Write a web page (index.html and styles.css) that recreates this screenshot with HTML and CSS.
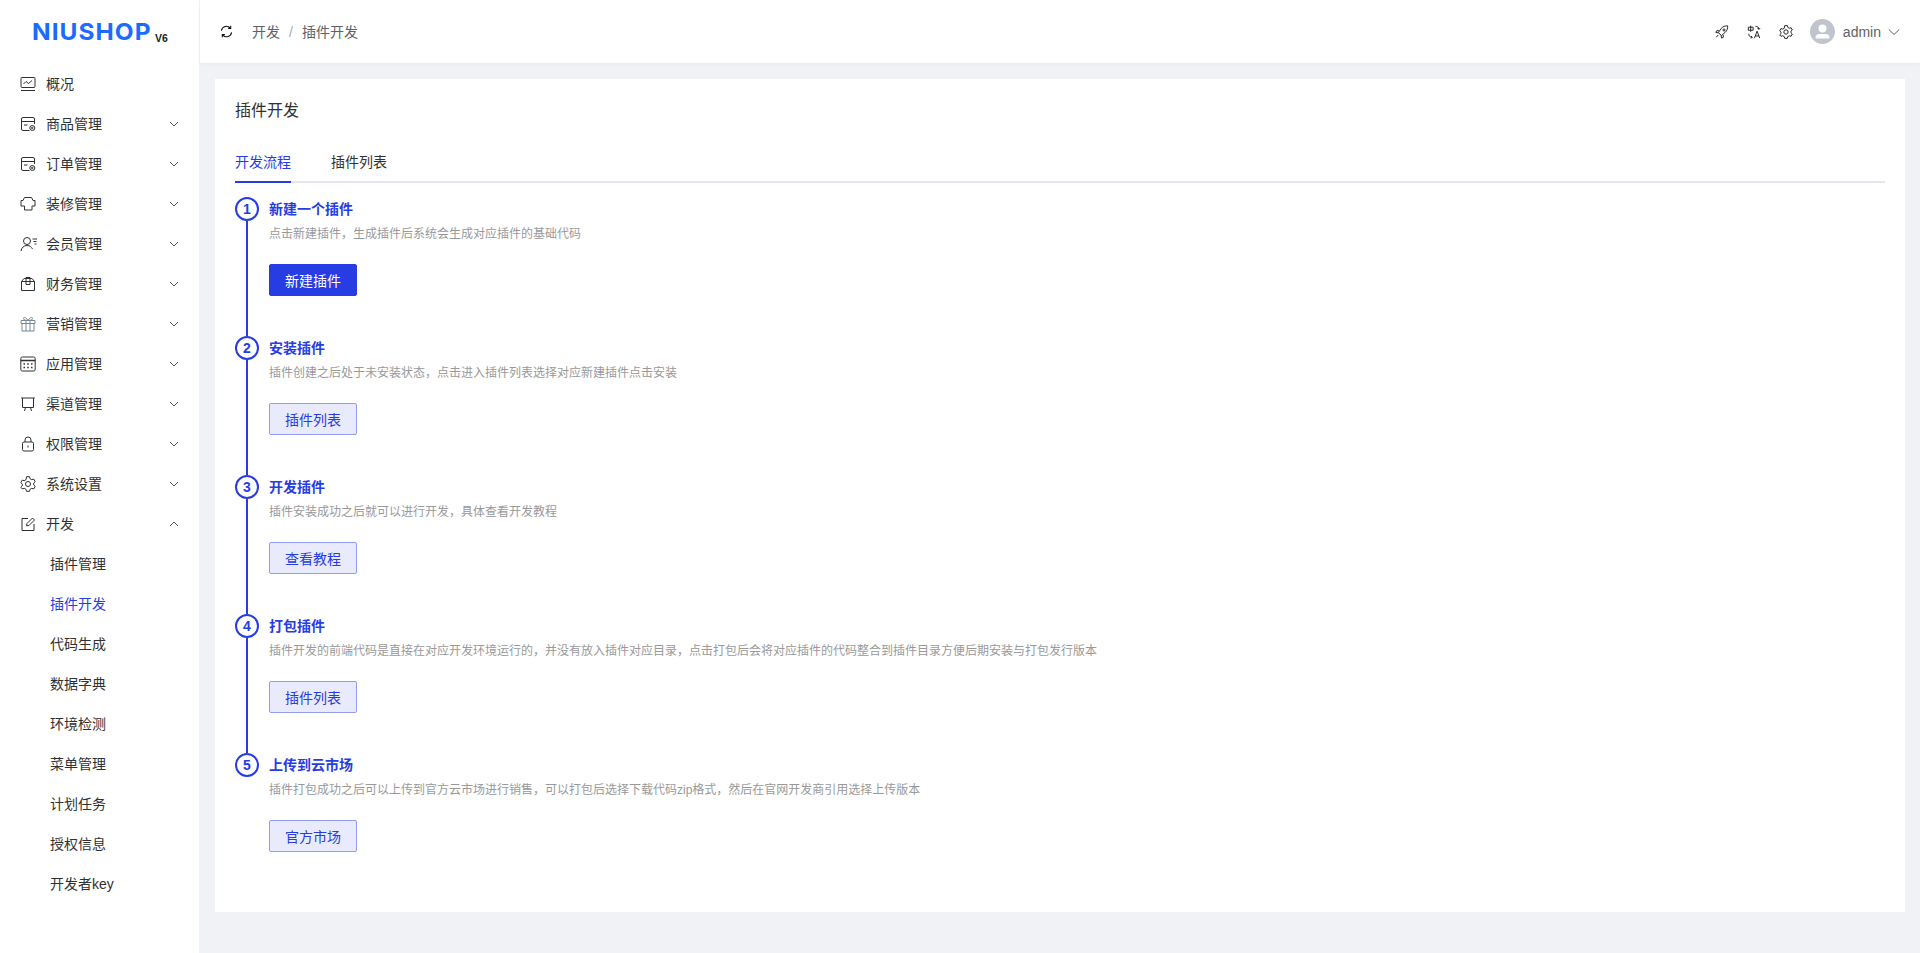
FILE: index.html
```html
<!DOCTYPE html>
<html lang="zh-CN">
<head>
<meta charset="utf-8">
<title>插件开发</title>
<link rel="stylesheet" href="styles.css">
</head>
<body>
<div class="app">
  <aside class="sidebar">
    <div class="logo"><span class="logo-word">NIUSHOP</span><span class="logo-ver">V6</span></div>
    <nav class="menu">
      <a class="item"><svg class="ico" viewBox="0 0 16 16"><rect x="1" y="1.5" width="14" height="10" rx="1"/><path d="M3.5 8l2.5-2.5 2.5 2 3.5-3M1 14.5h14"/></svg><span class="label">概况</span></a>
      <a class="item"><svg class="ico" viewBox="0 0 16 16"><path d="M14.5 8V3a1.500 1.500 0 0 0-1.500-1.500H3A1.500 1.500 0 0 0 1.500 3v10A1.500 1.500 0 0 0 3 14.500h6.500M1.500 5.500h13M4 9h3.500"/><circle cx="12.300" cy="12" r="2.500"/><circle cx="12.300" cy="12" r=".8"/></svg><span class="label">商品管理</span><svg class="chev" viewBox="0 0 12 12"><path d="M2 4l4 4 4-4"/></svg></a>
      <a class="item"><svg class="ico" viewBox="0 0 16 16"><path d="M14.500 8V3a1.500 1.500 0 0 0-1.500-1.500H3A1.500 1.500 0 0 0 1.500 3v10A1.500 1.500 0 0 0 3 14.500h6.500M1.500 5.500h13M4 9h3.500"/><circle cx="12.300" cy="12" r="2.500"/><circle cx="12.300" cy="12" r=".8"/></svg><span class="label">订单管理</span><svg class="chev" viewBox="0 0 12 12"><path d="M2 4l4 4 4-4"/></svg></a>
      <a class="item"><svg class="ico" viewBox="0 0 16 16"><path d="M4.500 1.500h7l1.500 3h2v5.500h-3v4H4.500v-4H1V4.500h2z"/></svg><span class="label">装修管理</span><svg class="chev" viewBox="0 0 12 12"><path d="M2 4l4 4 4-4"/></svg></a>
      <a class="item"><svg class="ico ico-wide" viewBox="0 0 18 16"><circle cx="7" cy="5" r="3.500"/><path d="M1 15c.5-3.500 3-5.500 6-5.500s4.500 1.500 5.500 3.500M12.500 3h4.500M13.500 5.500h3M14.500 8h2"/></svg><span class="label">会员管理</span><svg class="chev" viewBox="0 0 12 12"><path d="M2 4l4 4 4-4"/></svg></a>
      <a class="item"><svg class="ico" viewBox="0 0 16 16"><path d="M4 2.500h8l2.500 3v9h-13v-9zM1.500 5.500h13M6 1.500h4v7H6z"/></svg><span class="label">财务管理</span><svg class="chev" viewBox="0 0 12 12"><path d="M2 4l4 4 4-4"/></svg></a>
      <a class="item"><svg class="ico ico-soft" viewBox="0 0 16 16"><path d="M1 4.500h14v3H1zM2 7.500v7.500h12V7.500M6 4.500V15M10 4.500V15M8 4.500C6 1 3.500 .8 3.500 2.500S6 4.500 8 4.500c2 0 4.500-.3 4.500-2S10 1 8 4.500z"/></svg><span class="label">营销管理</span><svg class="chev" viewBox="0 0 12 12"><path d="M2 4l4 4 4-4"/></svg></a>
      <a class="item"><svg class="ico" viewBox="0 0 16 16"><rect x=".8" y="1" width="14.400" height="14" rx="1.500"/><path d="M.8 4.500h14.400M3.500 8h1.500M7.200 8h1.500M11 8h1.500M3.500 11.500h1.500M7.200 11.500h1.500M11 11.500h1.500" stroke-width="1.400"/></svg><span class="label">应用管理</span><svg class="chev" viewBox="0 0 12 12"><path d="M2 4l4 4 4-4"/></svg></a>
      <a class="item"><svg class="ico" viewBox="0 0 16 16"><path d="M1 2h14M2.500 2v9.500h11V2M5.500 11.500L4.500 15M10.500 11.500l1 3.500"/></svg><span class="label">渠道管理</span><svg class="chev" viewBox="0 0 12 12"><path d="M2 4l4 4 4-4"/></svg></a>
      <a class="item"><svg class="ico" viewBox="0 0 16 16"><rect x="2.500" y="6" width="11" height="9" rx="1.500"/><path d="M5 6V4a3 3 0 0 1 6 0v2M8 9.500v2"/></svg><span class="label">权限管理</span><svg class="chev" viewBox="0 0 12 12"><path d="M2 4l4 4 4-4"/></svg></a>
      <a class="item"><svg class="ico" viewBox="0 0 16 16"><path d="M6.500 1.200h3l.5 2 1.800 1 2-.6 1.400 2.600-1.500 1.400v1.800l1.500 1.400-1.400 2.600-2-.6-1.800 1-.5 2h-3l-.5-2-1.800-1-2 .6L.8 11.800l1.500-1.400V8.600L.8 7.200l1.400-2.600 2 .6 1.800-1z" transform="translate(0 -.5)"/><circle cx="8" cy="8" r="2.500"/></svg><span class="label">系统设置</span><svg class="chev" viewBox="0 0 12 12"><path d="M2 4l4 4 4-4"/></svg></a>
      <a class="item"><svg class="ico" viewBox="0 0 16 16"><path d="M8 2.500H2v12h12V8"/><path d="M6.500 9.800L7 7.500 12.500 2l2 2L9 9.500z"/></svg><span class="label">开发</span><svg class="chev" viewBox="0 0 12 12"><path d="M2 8l4-4 4 4"/></svg></a>
      <a class="sub">插件管理</a>
      <a class="sub sub-active">插件开发</a>
      <a class="sub">代码生成</a>
      <a class="sub">数据字典</a>
      <a class="sub">环境检测</a>
      <a class="sub">菜单管理</a>
      <a class="sub">计划任务</a>
      <a class="sub">授权信息</a>
      <a class="sub">开发者key</a>
    </nav>
  </aside>
  <div class="main">
    <header class="topbar">
      <svg class="refresh" viewBox="0 0 14 14"><path d="M1.500 6A5.500 5.500 0 0 1 11 3.200M12.500 8A5.500 5.500 0 0 1 3 10.800"/><path d="M11.500 .8v2.800H8.700M2.500 13.200v-2.800h2.800"/></svg>
      <div class="crumbs"><span>开发</span><span class="sep">/</span><span>插件开发</span></div>
      <div class="top-right">
        <svg class="top-ico" viewBox="0 0 16 16"><path d="M5.500 10.500L4 8.500 7 4c2-2.500 4.500-3 7.500-3 0 3-.5 5.500-3 7.500L7.500 12z"/><circle cx="10.300" cy="5.700" r="1.200"/><path d="M4.500 6.500H2L1 8.500l3 .5M9.500 11.500V14l-2 1-.5-3M3.500 11.500L1.500 14"/></svg>
        <svg class="top-ico" viewBox="0 0 16 16"><path d="M1.500 2.500h5.500v3.500H1.500zM4.200 .8v7M9.500 1.500c2.500 0 4 1 4 3.500M12 3.500l1.500 1.500L15 3.500M2 10c0 2.500 1.500 4 4 4M4.500 12.500L6 14l-1.500 1.500M8.500 15l3-8 3 8M9.500 12.500h4"/></svg>
        <svg class="top-ico top-gear" viewBox="0 0 16 16"><path d="M6.500 1.200h3l.5 2 1.800 1 2-.6 1.400 2.600-1.500 1.400v1.800l1.500 1.400-1.400 2.600-2-.6-1.800 1-.5 2h-3l-.5-2-1.800-1-2 .6L.8 11.800l1.500-1.400V8.600L.8 7.200l1.400-2.600 2 .6 1.800-1z" transform="translate(0 -.5)"/><circle cx="8" cy="8" r="2.500"/></svg>
        <div class="user">
          <svg class="avatar" viewBox="0 0 25 25"><circle cx="12.500" cy="12.500" r="12.500" fill="#c0c4cc"/><circle cx="12.500" cy="9.500" r="4" fill="#fff"/><path d="M5.500 18.500c0-2.300 1.500-3.500 3.500-3.500h7c2 0 3.500 1.200 3.500 3.500 0 .8-.5 1-1 1h-12c-.5 0-1-.2-1-1z" fill="#fff"/></svg>
          <span class="uname">admin</span>
          <svg class="user-chev" viewBox="0 0 12 12"><path d="M.8 3.500L6 8.500l5.200-5"/></svg>
        </div>
      </div>
    </header>
    <main class="content">
      <section class="card">
        <h1 class="card-title">插件开发</h1>
        <div class="tabs">
          <span class="tab tab-active">开发流程</span>
          <span class="tab">插件列表</span>
        </div>
        <ol class="steps">
          <li class="step">
            <div class="rail"><span class="num">1</span><span class="line"></span></div>
            <div class="body">
              <div class="step-title">新建一个插件</div>
              <div class="step-desc">点击新建插件，生成插件后系统会生成对应插件的基础代码</div>
              <button class="btn btn-primary">新建插件</button>
            </div>
          </li>
          <li class="step">
            <div class="rail"><span class="num">2</span><span class="line"></span></div>
            <div class="body">
              <div class="step-title">安装插件</div>
              <div class="step-desc">插件创建之后处于未安装状态，点击进入插件列表选择对应新建插件点击安装</div>
              <button class="btn">插件列表</button>
            </div>
          </li>
          <li class="step">
            <div class="rail"><span class="num">3</span><span class="line"></span></div>
            <div class="body">
              <div class="step-title">开发插件</div>
              <div class="step-desc">插件安装成功之后就可以进行开发，具体查看开发教程</div>
              <button class="btn">查看教程</button>
            </div>
          </li>
          <li class="step">
            <div class="rail"><span class="num">4</span><span class="line"></span></div>
            <div class="body">
              <div class="step-title">打包插件</div>
              <div class="step-desc">插件开发的前端代码是直接在对应开发环境运行的，并没有放入插件对应目录，点击打包后会将对应插件的代码整合到插件目录方便后期安装与打包发行版本</div>
              <button class="btn">插件列表</button>
            </div>
          </li>
          <li class="step">
            <div class="rail"><span class="num">5</span></div>
            <div class="body">
              <div class="step-title">上传到云市场</div>
              <div class="step-desc">插件打包成功之后可以上传到官方云市场进行销售，可以打包后选择下载代码zip格式，然后在官网开发商引用选择上传版本</div>
              <button class="btn">官方市场</button>
            </div>
          </li>
        </ol>
      </section>
    </main>
  </div>
</div>
</body>
</html>
```
FILE: styles.css
```css
* { box-sizing: border-box; }
html, body { margin: 0; height: 100%; }
body {
  font-family: "Liberation Sans", "Noto Sans CJK SC", sans-serif;
  font-size: 14px;
  color: #303133;
  background: #f0f2f5;
  overflow: hidden;
}
.app { display: flex; height: 953px; }
.sidebar {
  width: 200px;
  flex: none;
  background: #fff;
  border-right: 1px solid #eff3f9;
}
.logo {
  height: 64px;
  display: flex;
  align-items: flex-start;
  padding: 19px 0 0 32px;
}
.logo-word {
  display: inline-block;
  width: 122px;
  font-family: Inter, sans-serif;
  font-weight: 700;
  font-size: 23.5px;
  line-height: 25px;
  letter-spacing: 1px;
  color: #1c6bff;
  transform: scaleX(1.04);
  transform-origin: left center;
  white-space: nowrap;
}
.logo-ver {
  font-family: "Liberation Sans", sans-serif;
  font-weight: 700;
  font-size: 10.5px;
  line-height: 12px;
  margin: 13px 0 0 1px;
  color: #222;
}
.menu { display: flex; flex-direction: column; }
.item {
  height: 40px;
  display: flex;
  align-items: center;
  padding: 0 19px 0 20px;
  color: #303133;
}
.ico {
  width: 16px;
  height: 16px;
  flex: none;
  margin-right: 10px;
  fill: none;
  stroke: #303133;
  stroke-width: 1;
}
.ico-wide { width: 18px; margin-right: 8px; }
.ico-soft { stroke: #77889a; }
.label { flex: 1; padding-bottom: 2px; }
.chev {
  width: 12px;
  height: 12px;
  fill: none;
  stroke: #555;
  stroke-width: 1;
}
.sub {
  height: 40px;
  display: flex;
  align-items: center;
  padding: 0 0 2px 50px;
  color: #303133;
}
.sub-active { color: #273ce2; }
.main { flex: 1; min-width: 0; display: flex; flex-direction: column; }
.topbar {
  height: 63px;
  flex: none;
  background: #fff;
  display: flex;
  align-items: center;
  padding: 0 20px 0 20px;
  box-shadow: 0 1px 4px rgba(0, 21, 41, 0.04);
}
.refresh {
  width: 13px;
  height: 13px;
  flex: none;
  fill: none;
  stroke: #111;
  stroke-width: 1.200;
  margin-right: 19px;
}
.crumbs { display: flex; align-items: baseline; color: #606266; padding-bottom: 1px; }
.sep { margin: 0 9px; color: #a8abb2; }
.top-right { margin-left: auto; display: flex; align-items: center; }
.top-ico {
  width: 14px;
  height: 14px;
  fill: none;
  stroke: #222;
  stroke-width: 1.100;
  margin-right: 18px;
}
.top-gear { margin-right: 17px; }
.user { display: flex; align-items: center; }
.avatar { width: 25px; height: 25px; margin-right: 8px; }
.uname { color: #606266; }
.user-chev {
  width: 12px;
  height: 12px;
  fill: none;
  stroke: #606266;
  stroke-width: 1;
  margin-left: 7px;
}
.content { padding: 16px 15px 0 15px; }
.card { background: #fff; padding: 21px 20px 20px; height: 833px; }
.card-title {
  margin: 0;
  font-size: 16px;
  font-weight: 400;
  line-height: 22px;
  color: #303133;
}
.tabs {
  margin-top: 21px;
  display: flex;
  gap: 40px;
  border-bottom: 2px solid #e4e7ed;
  height: 40px;
}
.tab { height: 40px; line-height: 38px; color: #303133; }
.tab-active { color: #273ce2; border-bottom: 2px solid #273ce2; }
.steps { list-style: none; margin: 14px 0 0; padding: 0; }
.step { display: flex; height: 139px; }
.rail {
  width: 24px;
  flex: none;
  display: flex;
  flex-direction: column;
  align-items: center;
  margin-right: 10px;
}
.num {
  width: 24px;
  height: 24px;
  flex: none;
  border: 2px solid #273ce2;
  border-radius: 50%;
  color: #273ce2;
  font-size: 14px;
  font-weight: 700;
  line-height: 20px;
  text-align: center;
}
.line { flex: 1; width: 2px; background: #273ce2; }
.body { flex: 1; }
.step-title {
  height: 24px;
  line-height: 24px;
  font-weight: 700;
  color: #273ce2;
}
.step-desc {
  margin-top: 3px;
  line-height: 20px;
  font-size: 12px;
  color: #999;
}
.btn {
  display: block;
  margin-top: 20px;
  width: 88px;
  height: 32px;
  padding: 0;
  font: inherit;
  color: #273ce2;
  background: #e9ebfc;
  border: 1px solid #939df0;
  border-radius: 2px;
}
.btn-primary { background: #273ce2; border-color: #273ce2; color: #fff; }
```
